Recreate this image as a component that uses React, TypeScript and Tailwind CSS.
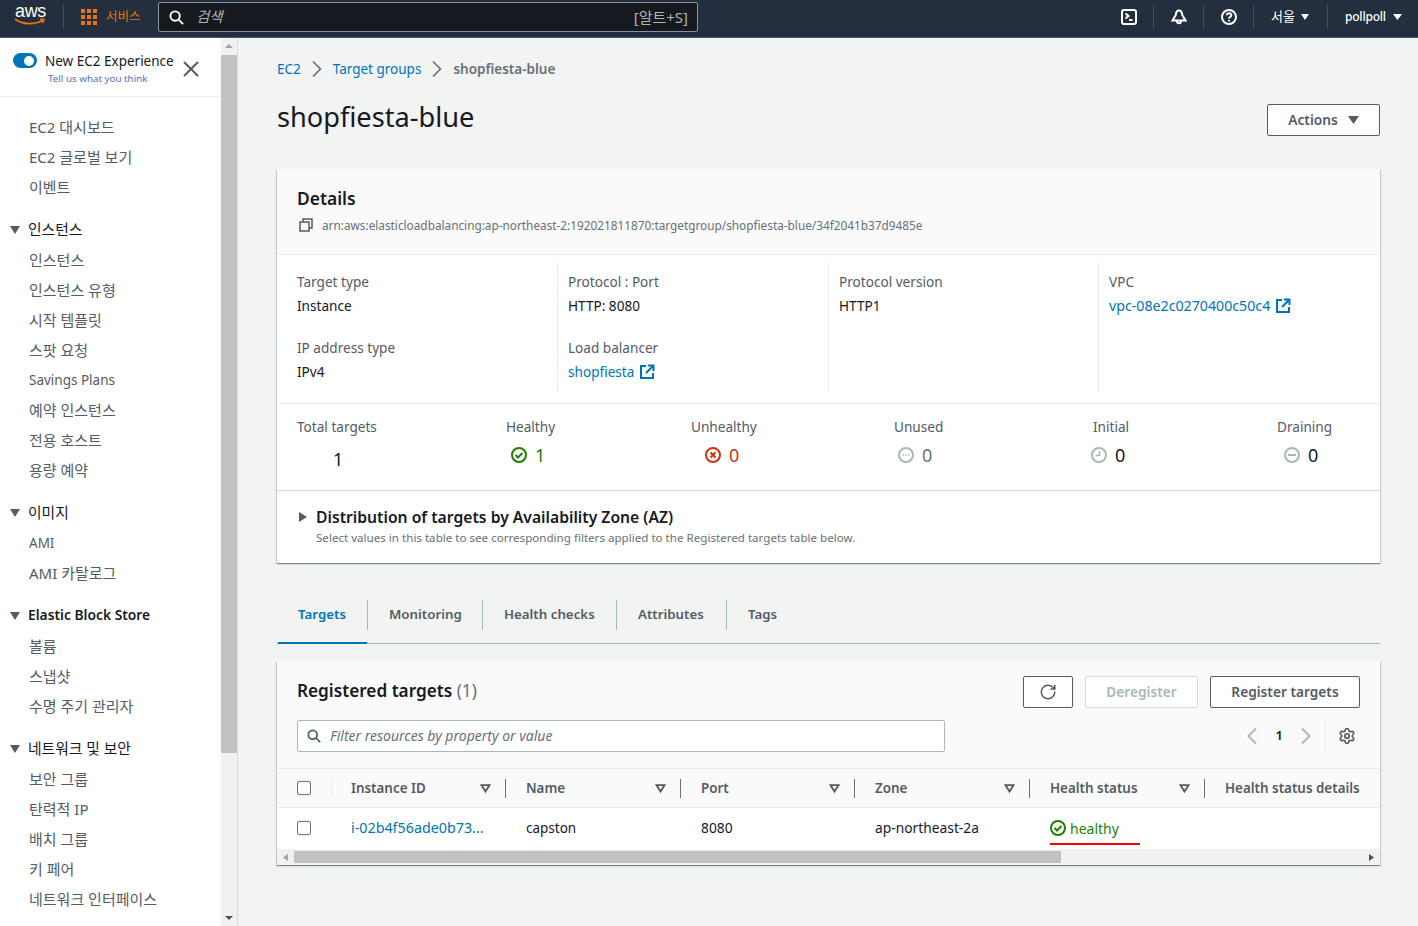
import { ChevronLeft, ChevronRight, RotateCw, Settings, X } from "lucide-react";

const FONT = "font-['Noto_Sans','Noto_Sans_CJK_KR',sans-serif]";

const navGroups = [
  { title: "", items: ["EC2 대시보드", "EC2 글로벌 보기", "이벤트"] },
  { title: "인스턴스", items: ["인스턴스", "인스턴스 유형", "시작 템플릿", "스팟 요청", "Savings Plans", "예약 인스턴스", "전용 호스트", "용량 예약"] },
  { title: "이미지", items: ["AMI", "AMI 카탈로그"] },
  { title: "Elastic Block Store", items: ["볼륨", "스냅샷", "수명 주기 관리자"] },
  { title: "네트워크 및 보안", items: ["보안 그룹", "탄력적 IP", "배치 그룹", "키 페어", "네트워크 인터페이스"] },
];

const hasKorean = (s: string) => /[가-힣]/.test(s);

const columns = ["Instance ID", "Name", "Port", "Zone", "Health status"];

const stats = [
  { label: "Healthy", value: "1", kind: "ok", tone: "text-[#1d8102]", gap: "ml-[5px]" },
  { label: "Unhealthy", value: "0", kind: "bad", tone: "text-[#d13212]", gap: "ml-[14px]" },
  { label: "Unused", value: "0", kind: "dots", tone: "text-[#687078]", gap: "ml-[4px]" },
  { label: "Initial", value: "0", kind: "clock", tone: "text-[#16191f]", gap: "ml-[-2px]" },
  { label: "Draining", value: "0", kind: "dash", tone: "text-[#16191f]", gap: "ml-[7px]" },
];

const tabs = [
  { name: "Targets", width: "w-[91px]" },
  { name: "Monitoring", width: "w-[115px]" },
  { name: "Health checks", width: "w-[134px]" },
  { name: "Attributes", width: "w-[110px]" },
  { name: "Tags", width: "w-[80px]" },
];

// size comes from className, there is no default on purpose
function Caret({ className = "" }: { className?: string }) {
  return (
    <svg viewBox="0 0 10 8" preserveAspectRatio="none" className={`fill-current ${className}`}>
      <path d="M0 0h10L5 8z" />
    </svg>
  );
}

function ExternalIcon() {
  return (
    <svg viewBox="0 0 16 16" className="w-[16px] h-[16px] fill-none stroke-[#0073bb] stroke-2">
      <path d="M7 2H2v12h12V9M9 1.500h5.500V7M14.500 1.500 7 9" />
    </svg>
  );
}

function SortIcon() {
  return (
    <svg viewBox="0 0 12 10" className="w-[11px] h-[9px] fill-none stroke-[#545b64] stroke-2">
      <path d="M1.500 1.200h9L6 8.400z" />
    </svg>
  );
}

function StatusIcon({ kind }: { kind: string }) {
  const tone = kind === "ok" ? "stroke-[#1d8102]" : kind === "bad" ? "stroke-[#d13212]" : "stroke-[#aab7b8]";
  return (
    <svg viewBox="0 0 16 16" className={`w-[16px] h-[16px] fill-none stroke-2 ${tone}`}>
      <circle cx="8" cy="8" r="7" />
      {kind === "ok" && <path d="M4.500 8l2.500 2.500 4.500-4.500" />}
      {kind === "bad" && <path d="M5.500 5.500l5 5M10.500 5.500l-5 5" />}
      {kind === "dots" && <path strokeWidth="1.400" strokeDasharray="1.400 1.300" d="M4.500 8h7" />}
      {kind === "clock" && <path strokeWidth="1.500" d="M8.500 4v4.500H4.500" />}
      {kind === "dash" && <path d="M4 8h8" />}
    </svg>
  );
}

function TopBar() {
  return (
    <header className="h-[38px] shrink-0 bg-[#232f3e] border-b border-[#4b5563] pb-[3px] flex items-center text-white">
      <div className="w-[63px] h-[38px] shrink-0 relative flex justify-center">
        <span className="text-[18px] leading-[16px] mt-[5px] font-['Liberation_Sans',sans-serif] tracking-[-0.3px] mr-[2px]">aws</span>
        <svg viewBox="0 0 32 8" className="absolute left-[14px] top-[20px] w-[32px] h-[8px] fill-none stroke-[#ec7211] stroke-[1.600]">
          <path d="M1 1c8 6 20 6 28 1M26 1l4 .5-1.500 3.500" />
        </svg>
      </div>
      <div className="w-px h-[24px] bg-[#414d5c]" />
      <div className="grid grid-cols-3 gap-[2px] ml-[17px] w-[16px]">
        {Array.from({ length: 9 }).map((_, i) => (
          <div key={i} className="w-[4px] h-[4px] bg-[#ec7211]" />
        ))}
      </div>
      <span className="ml-[9px] text-[12.500px] text-[#ec7211] w-[36px]">서비스</span>
      <div className="ml-[16px] w-[540px] h-[30px] bg-[#16191f] border border-[#879596] rounded-[2px] flex items-center pl-[10px] pr-[9px]">
        <svg viewBox="0 0 16 16" className="w-[15px] h-[15px] fill-none stroke-white stroke-2">
          <circle cx="6.500" cy="6.500" r="5" />
          <path d="M10 10l5 5" />
        </svg>
        <span className="ml-[12px] text-[14.500px] italic text-[#aab7b8]">검색</span>
        <span className="ml-auto text-[15px] text-[#aab7b8]">[알트+S]</span>
      </div>
      <div className="ml-auto flex items-center h-full">
        <svg viewBox="0 0 16 16" className="w-[16px] h-[16px] fill-none stroke-white stroke-2">
          <rect x="1" y="1" width="14" height="14" rx="2" />
          <path d="M4.500 4.500l3 2.500-3 2.500M8 11h3.500" />
        </svg>
        <div className="w-px h-[24px] bg-[#414d5c] ml-[16px]" />
        <svg viewBox="0 0 16 16" className="w-[16px] h-[16px] ml-[17px] fill-none stroke-white stroke-2">
          <path d="M8 1.500c-2.500 0-3 2-3.200 4.500L1.500 11.500h13L11.200 6C11 3.500 10.500 1.500 8 1.500zM6 12c0 3 4 3 4 0" />
        </svg>
        <div className="w-px h-[24px] bg-[#414d5c] ml-[16px]" />
        <svg viewBox="0 0 16 16" className="w-[16px] h-[16px] ml-[17px] fill-none stroke-white stroke-2">
          <circle cx="8" cy="8" r="7" />
          <path d="M5.800 6.200C5.800 3.500 10.300 3.600 10.300 6.200 10.300 7.900 8 7.900 8 9.700M8 11v1.500" />
        </svg>
        <div className="w-px h-[24px] bg-[#414d5c] ml-[16px]" />
        <span className="ml-[17px] text-[13px] w-[24px] whitespace-nowrap">서울</span>
        <Caret className="ml-[6px] w-[8px] h-[6px]" />
        <div className="w-px h-[24px] bg-[#414d5c] ml-[18px]" />
        <span className="ml-[17px] text-[12px] font-medium w-[42px] tracking-[-0.2px]">pollpoll</span>
        <Caret className="ml-[6px] mr-[16px] w-[9px] h-[6px]" />
      </div>
    </header>
  );
}

function Sidebar() {
  return (
    <aside className="w-[238px] shrink-0 flex border-r border-[#d5dbdb] bg-white overflow-hidden">
      <div className="w-[221px] shrink-0">
        <div className="h-[59px] border-b border-[#eaeded] relative pl-[13px] pt-[15px]">
          <div className="flex">
            <div className="w-[24px] h-[15px] rounded-full bg-[#0073bb] flex justify-end items-center pr-[3px]">
              <div className="w-[10px] h-[10px] rounded-full bg-white" />
            </div>
            <div className="ml-[8px] -mt-[1px]">
              <div className="text-[13.500px] leading-[18px] text-[#16191f] whitespace-nowrap">New EC2 Experience</div>
              <div className="text-[9.800px] leading-[17px] text-[#5c6bc0] ml-[3px] whitespace-nowrap">Tell us what you think</div>
            </div>
          </div>
          <X className="absolute left-[178px] top-[18px] text-[#545b64]" size={26} strokeWidth={1.800} />
        </div>
        <nav className="pt-[15px]">
          {navGroups.map((g) => (
            <div key={g.title || "top"}>
              {g.title && (
                <div
                  className={`h-[31px] mt-[12px] flex items-center text-[#16191f] ${
                    hasKorean(g.title) ? "text-[14.800px] font-normal" : "text-[13.800px] font-semibold"
                  }`}
                >
                  <Caret className="ml-[10px] mr-[8px] w-[10px] h-[8px] text-[#545b64]" />
                  {g.title}
                </div>
              )}
              {g.items.map((item) => (
                <div
                  key={item}
                  className={`h-[30px] flex items-center pl-[29px] text-[#545b64] whitespace-nowrap ${
                    hasKorean(item) ? "text-[15px]" : "text-[13.500px]"
                  }`}
                >
                  {item}
                </div>
              ))}
            </div>
          ))}
        </nav>
      </div>
      <div className="w-[16px] shrink-0 bg-[#f1f1f1] flex flex-col items-center">
        <Caret className="mt-[6px] w-[8px] h-[4px] rotate-180 text-[#a3a3a3]" />
        <div className="w-full h-[698px] mt-[7px] bg-[#c1c1c1]" />
        <Caret className="mt-auto mb-[6px] w-[8px] h-[4px] text-[#505050]" />
      </div>
    </aside>
  );
}

function Field({ label, children }: { label: string; children: React.ReactNode }) {
  return (
    <div className="h-[66px]">
      <div className="text-[13.600px] leading-[24px] text-[#545b64]">{label}</div>
      <div className="text-[13.600px] leading-[24px] text-[#16191f] flex items-center gap-[5px]">{children}</div>
    </div>
  );
}

function DetailsCard() {
  return (
    <section className="mt-[33px] bg-white shadow-[0_1px_1px_0_rgba(0,28,36,0.3),1px_1px_1px_0_rgba(0,28,36,0.15),-1px_1px_1px_0_rgba(0,28,36,0.15)]">
      <div className="h-[86px] bg-[#fafafa] border-b border-[#eaeded] px-[20px] pt-[16px]">
        <h2 className="text-[17.400px] leading-[26px] font-semibold text-[#16191f]">Details</h2>
        <div className="flex items-center mt-[4px]">
          <svg viewBox="0 0 14 14" className="w-[14px] h-[14px] ml-[2px] fill-none stroke-[#545b64] stroke-[1.500]">
            <rect x="1" y="4" width="9" height="9" />
            <path d="M4 4V1h9v9h-3" />
          </svg>
          <span className="ml-[9px] text-[11.800px] leading-[20px] text-[#687078] whitespace-nowrap">
            arn:aws:elasticloadbalancing:ap-northeast-2:192021811870:targetgroup/shopfiesta-blue/34f2041b37d9485e
          </span>
        </div>
      </div>

      <div className="h-[149px] border-b border-[#eaeded] pl-[20px] pt-[7px] grid grid-cols-[261px_271px_270px_1fr]">
        <div className="h-[131px] pt-[8px] border-r border-[#eaeded]">
          <Field label="Target type">Instance</Field>
          <Field label="IP address type">IPv4</Field>
        </div>
        <div className="h-[131px] pt-[8px] pl-[10px] border-r border-[#eaeded]">
          <Field label="Protocol : Port">HTTP: 8080</Field>
          <Field label="Load balancer">
            <span className="text-[#0073bb]">shopfiesta</span>
            <ExternalIcon />
          </Field>
        </div>
        <div className="h-[131px] pt-[8px] pl-[10px] border-r border-[#eaeded]">
          <Field label="Protocol version">HTTP1</Field>
        </div>
        <div className="h-[66px] pt-[8px] pl-[10px] -ml-px border-l border-[#eaeded] overflow-hidden">
          <Field label="VPC">
            <span className="text-[#0073bb] text-[14.200px]">vpc-08e2c0270400c50c4</span>
            <ExternalIcon />
          </Field>
        </div>
      </div>

      <div className="h-[87px] border-b border-[#d5dbdb] px-[20px] pt-[13px] grid grid-cols-[209px_185px_203px_199px_184px_1fr]">
        <div>
          <div className="text-[13.600px] leading-[20px] text-[#545b64]">Total targets</div>
          <div className="text-[18px] leading-[24px] mt-[10px] ml-[36px] text-[#16191f]">1</div>
        </div>
        {stats.map((s) => (
          <div key={s.label}>
            <div className="text-[13.600px] leading-[20px] text-[#545b64]">{s.label}</div>
            <div className={`flex items-center gap-[8px] mt-[6px] text-[18px] leading-[24px] ${s.tone} ${s.gap}`}>
              <StatusIcon kind={s.kind} />
              {s.value}
            </div>
          </div>
        ))}
      </div>

      <div className="h-[72px] px-[20px] pt-[14px]">
        <div className="flex items-center">
          <svg viewBox="0 0 8 10" className="w-[8px] h-[10px] ml-[2px] fill-[#545b64]">
            <path d="M0 0l8 5-8 5z" />
          </svg>
          <span className="ml-[9px] text-[15.700px] leading-[24px] font-semibold text-[#16191f]">
            Distribution of targets by Availability Zone (AZ)
          </span>
        </div>
        <div className="ml-[19px] text-[11.600px] leading-[18px] text-[#687078]">
          Select values in this table to see corresponding filters applied to the Registered targets table below.
        </div>
      </div>
    </section>
  );
}

function Tabs() {
  return (
    <div className="mt-[37px] h-[44px] border-b border-[#aab7b8] flex items-start relative">
      {tabs.map((t, i) => (
        <div
          key={t.name}
          className={`h-[30px] flex items-center pl-[21px] text-[13.300px] font-semibold whitespace-nowrap ${t.width} ${
            i === 0 ? "text-[#0073bb]" : "text-[#545b64]"
          } ${i < tabs.length - 1 ? "border-r border-[#aab7b8]" : ""}`}
        >
          {t.name}
        </div>
      ))}
      <div className="absolute left-[1px] bottom-[-1px] w-[89px] h-[2px] bg-[#0073bb]" />
    </div>
  );
}

function TargetsTable() {
  return (
    <section className="mt-[17px] bg-white shadow-[0_1px_1px_0_rgba(0,28,36,0.3),1px_1px_1px_0_rgba(0,28,36,0.15),-1px_1px_1px_0_rgba(0,28,36,0.15)]">
      <div className="h-[108px] bg-[#fafafa] border-b border-[#eaeded] px-[20px] pt-[15px]">
        <div className="flex items-center h-[32px]">
          <h2 className="text-[17.200px] font-semibold text-[#16191f] mb-[2px]">
            Registered targets <span className="font-normal text-[#687078]">(1)</span>
          </h2>
          <button className="ml-auto w-[50px] h-[32px] bg-white border border-[#545b64] rounded-[2px] flex items-center justify-center text-[#545b64]">
            <RotateCw size={18} strokeWidth={2} />
          </button>
          <button className="ml-[12px] w-[113px] h-[32px] bg-white border border-[#d5dbdb] rounded-[2px] text-[13.700px] font-semibold text-[#aab7b8]">
            Deregister
          </button>
          <button className="ml-[12px] w-[150px] h-[32px] bg-white border border-[#545b64] rounded-[2px] text-[13.700px] font-semibold text-[#545b64]">
            Register targets
          </button>
        </div>
        <div className="flex items-center mt-[12px] h-[32px]">
          <div className="w-[648px] h-[32px] bg-white border border-[#aab7b8] rounded-[2px] flex items-center pl-[9px]">
            <svg viewBox="0 0 16 16" className="w-[14px] h-[14px] fill-none stroke-[#545b64] stroke-2">
              <circle cx="6.500" cy="6.500" r="5" />
              <path d="M10 10l5 5" />
            </svg>
            <span className="ml-[9px] text-[14px] italic text-[#687078] -mt-[1px]">Filter resources by property or value</span>
          </div>
          <ChevronLeft className="ml-auto text-[#aab7b8]" size={28} strokeWidth={1.600} />
          <span className="ml-[10px] text-[13px] font-semibold text-[#16191f]">1</span>
          <ChevronRight className="ml-[9px] text-[#aab7b8]" size={28} strokeWidth={1.600} />
          <div className="w-px h-[32px] bg-[#eaeded] ml-[5px]" />
          <Settings className="ml-[12px] mr-[4px] text-[#545b64]" size={18} strokeWidth={2.200} />
        </div>
      </div>

      <div className="h-[39px] bg-[#fafafa] border-b border-[#eaeded] flex items-center overflow-hidden text-[13.400px] font-semibold text-[#545b64]">
        <div className="w-[54px] shrink-0 flex items-center h-full pl-[20px] pb-[1px] relative">
          <div className="w-[14px] h-[14px] bg-white border border-[#687078] rounded-[2px]" />
          <div className="absolute left-[54px] top-[10px] w-px h-[19px] bg-[#eaeded]" />
        </div>
        <div className="w-[20px] shrink-0" />
        {columns.map((c, i) => (
          <div key={c} className={`shrink-0 flex items-center h-full ${i === 2 ? "w-[174px]" : "w-[175px]"}`}>
            <span className="whitespace-nowrap">{c}</span>
            <span className="ml-auto mr-[14px]"><SortIcon /></span>
            <div className="w-px h-[19px] bg-[#687078] mr-[20px]" />
          </div>
        ))}
        <span className="whitespace-nowrap">Health status details</span>
      </div>

      <div className="h-[41px] pb-[1px] flex items-center overflow-hidden text-[13.800px] text-[#16191f]">
        <div className="w-[74px] shrink-0 pl-[20px]">
          <div className="w-[14px] h-[14px] bg-white border border-[#687078] rounded-[2px]" />
        </div>
        <div className="w-[175px] shrink-0 text-[14.300px] text-[#0073bb]">i-02b4f56ade0b73...</div>
        <div className="w-[175px] shrink-0 text-[13.500px]">capston</div>
        <div className="w-[174px] shrink-0">8080</div>
        <div className="w-[175px] shrink-0">ap-northeast-2a</div>
        <div className="relative flex items-center gap-[4px] text-[14px] text-[#1d8102]">
          <StatusIcon kind="ok" />
          healthy
          <div className="absolute left-0 top-[25px] w-[90px] h-[2px] bg-[#f00000]" />
        </div>
      </div>

      <div className="h-[16px] bg-[#f1f1f1] flex items-center">
        <Caret className="ml-[5px] w-[7px] h-[5px] rotate-90 text-[#a3a3a3] shrink-0" />
        <div className="ml-[5px] w-[767px] h-[12px] bg-[#c1c1c1]" />
        <Caret className="ml-auto mr-[5px] w-[7px] h-[5px] -rotate-90 text-[#505050] shrink-0" />
      </div>
    </section>
  );
}

export default function App() {
  return (
    <div className={`h-[926px] w-[1418px] overflow-hidden flex flex-col bg-[#f2f3f3] ${FONT}`}>
      <TopBar />
      <div className="flex flex-1 min-h-0">
        <Sidebar />
        <main className="flex-1 min-w-0 pl-[39px] pr-[38px]">
          <div className="flex items-center h-[20px] mt-[21px] text-[13.500px]">
            <span className="text-[#0073bb]">EC2</span>
            <ChevronRight className="mx-[2px] text-[#687078]" size={28} strokeWidth={1.500} />
            <span className="text-[#0073bb]">Target groups</span>
            <ChevronRight className="mx-[2px] text-[#687078]" size={28} strokeWidth={1.500} />
            <span className="font-semibold text-[#687078]">shopfiesta-blue</span>
          </div>
          <div className="flex items-start justify-between mt-[25px] h-[32px]">
            <h1 className="text-[27.200px] leading-[32px] -mt-[3px] text-[#16191f]">shopfiesta-blue</h1>
            <button className="w-[113px] h-[32px] bg-white border border-[#545b64] rounded-[2px] text-[13.700px] font-semibold text-[#545b64] flex items-center justify-center gap-[10px]">
              Actions
              <Caret className="w-[11px] h-[8px]" />
            </button>
          </div>
          <DetailsCard />
          <Tabs />
          <TargetsTable />
        </main>
      </div>
    </div>
  );
}
